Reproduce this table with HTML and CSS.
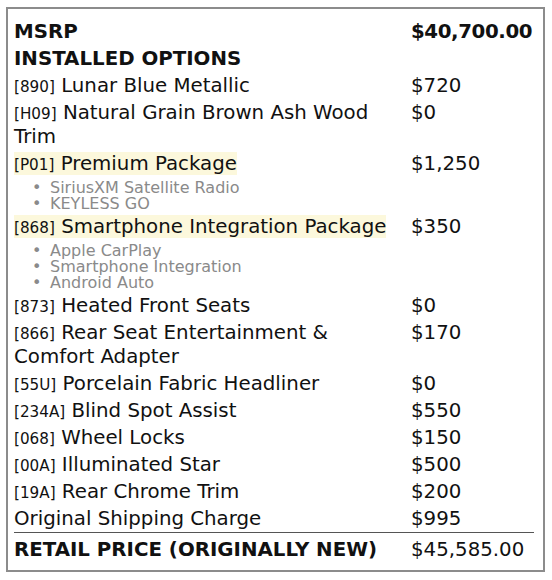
FILE: index.html
```html
<!DOCTYPE html>
<html lang="en">
<head>
<meta charset="utf-8">
<title>Window Sticker</title>
<link rel="stylesheet" href="styles.css">
</head>
<body>
<div class="sticker">
  <table class="options">
    <tr class="head">
      <td class="name">MSRP</td>
      <td class="price">$40,700.00</td>
    </tr>
    <tr class="head">
      <td class="name">INSTALLED OPTIONS</td>
      <td class="price"></td>
    </tr>
    <tr>
      <td class="name"><span class="code">[890]</span> Lunar Blue Metallic</td>
      <td class="price">$720</td>
    </tr>
    <tr>
      <td class="name"><span class="code">[H09]</span> Natural Grain Brown Ash Wood Trim</td>
      <td class="price">$0</td>
    </tr>
    <tr>
      <td class="name"><span class="pkg"><span class="code">[P01]</span> Premium Package</span>
        <ul class="items">
          <li>SiriusXM Satellite Radio</li>
          <li>KEYLESS GO</li>
        </ul>
      </td>
      <td class="price">$1,250</td>
    </tr>
    <tr>
      <td class="name"><span class="pkg"><span class="code">[868]</span> Smartphone Integration Package</span>
        <ul class="items">
          <li>Apple CarPlay</li>
          <li>Smartphone Integration</li>
          <li>Android Auto</li>
        </ul>
      </td>
      <td class="price">$350</td>
    </tr>
    <tr>
      <td class="name"><span class="code">[873]</span> Heated Front Seats</td>
      <td class="price">$0</td>
    </tr>
    <tr>
      <td class="name"><span class="code">[866]</span> Rear Seat Entertainment &amp; Comfort Adapter</td>
      <td class="price">$170</td>
    </tr>
    <tr>
      <td class="name"><span class="code">[55U]</span> Porcelain Fabric Headliner</td>
      <td class="price">$0</td>
    </tr>
    <tr>
      <td class="name"><span class="code">[234A]</span> Blind Spot Assist</td>
      <td class="price">$550</td>
    </tr>
    <tr>
      <td class="name"><span class="code">[068]</span> Wheel Locks</td>
      <td class="price">$150</td>
    </tr>
    <tr>
      <td class="name"><span class="code">[00A]</span> Illuminated Star</td>
      <td class="price">$500</td>
    </tr>
    <tr>
      <td class="name"><span class="code">[19A]</span> Rear Chrome Trim</td>
      <td class="price">$200</td>
    </tr>
    <tr>
      <td class="name">Original Shipping Charge</td>
      <td class="price">$995</td>
    </tr>
    <tr class="total">
      <td class="name">RETAIL PRICE (ORIGINALLY NEW)</td>
      <td class="price">$45,585.00</td>
    </tr>
  </table>
</div>
</body>
</html>
```

FILE: styles.css
```css
html, body {
  margin: 0;
  padding: 0;
  background: #ffffff;
}

body {
  font-family: "DejaVu Sans", "Liberation Sans", sans-serif;
  color: #111111;
}

.sticker {
  box-sizing: border-box;
  width: 539px;
  margin: 7px 0 0 6px;
  border: 2px solid #8c8c8c;
  padding: 9px 9px 7px 6px;
}

.options {
  width: 100%;
  table-layout: fixed;
  border-collapse: collapse;
  font-size: 19.8px;
  line-height: 24px;
}

.options td {
  padding: 2px 0 1px 0;
  vertical-align: top;
}

.options td.name {
  width: 391px;
  padding-right: 6px;
}

.options td.price {
  white-space: nowrap;
}

.head td {
  font-weight: bold;
}

.head td.price {
  letter-spacing: -0.4px;
}

.code {
  font-size: 15.2px;
  line-height: 1;
}

.pkg {
  background: #fcf8dc;
}

.items {
  margin: 4px 0 0 0;
  padding: 0 0 0 36px;
  list-style: none;
  font-size: 16px;
  line-height: 16px;
  color: #8a8a8a;
}

.items li::before {
  content: "\2022";
  display: inline-block;
  width: 18px;
  margin-left: -18px;
}

.total td {
  border-top: 1px solid #555555;
  padding-top: 5px;
  font-weight: bold;
}

.total td.price {
  font-weight: normal;
}
```
